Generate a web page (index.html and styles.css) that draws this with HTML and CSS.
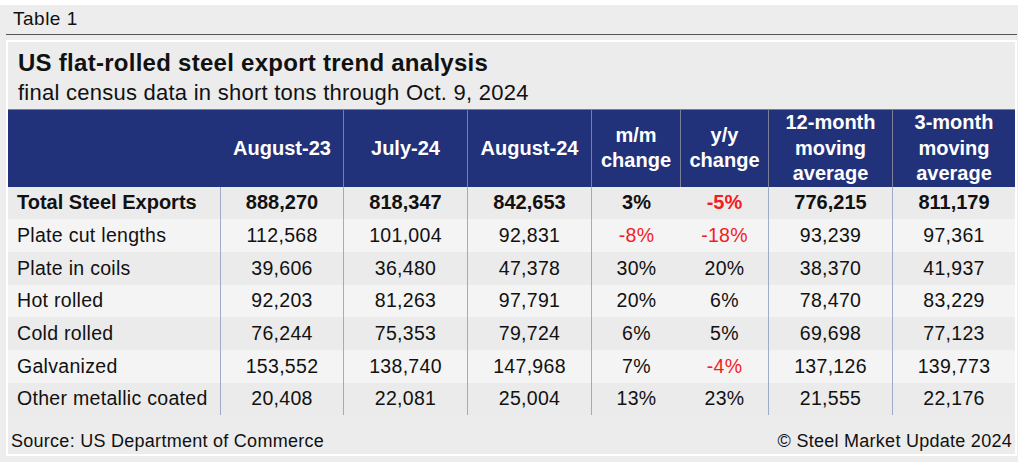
FILE: index.html
```html
<!DOCTYPE html>
<html lang="en">
<head>
<meta charset="utf-8">
<title>Table 1</title>
<link rel="stylesheet" href="styles.css">
</head>
<body>
<div class="page">
  <div class="caption">Table 1</div>
  <div class="rule"></div>
  <div class="panel">
    <h1 class="title">US flat-rolled steel export trend analysis</h1>
    <p class="subtitle">final census data in short tons through Oct. 9, 2024</p>
    <table class="data">
      <colgroup>
        <col class="c-label"><col class="c-w123"><col class="c-w124"><col class="c-w124"><col class="c-w89"><col class="c-w88"><col class="c-w124"><col class="c-w122">
      </colgroup>
      <thead>
        <tr>
          <th class="h-first"></th>
          <th class="h-div">August-23</th>
          <th class="h-div">July-24</th>
          <th class="h-div">August-24</th>
          <th class="h-div">m/m<br>change</th>
          <th class="h-div">y/y<br>change</th>
          <th class="h-div">12-month<br>moving<br>average</th>
          <th>3-month<br>moving<br>average</th>
        </tr>
      </thead>
      <tbody>
        <tr class="total dark">
          <td class="label b-div">Total Steel Exports</td>
          <td class="b-div">888,270</td><td class="b-div">818,347</td><td class="b-div">842,653</td>
          <td>3%</td><td class="neg b-div">-5%</td><td class="b-div">776,215</td><td>811,179</td>
        </tr>
        <tr class="light">
          <td class="label b-div">Plate cut lengths</td>
          <td class="b-div">112,568</td><td class="b-div">101,004</td><td class="b-div">92,831</td>
          <td class="neg">-8%</td><td class="neg b-div">-18%</td><td class="b-div">93,239</td><td>97,361</td>
        </tr>
        <tr class="dark">
          <td class="label b-div">Plate in coils</td>
          <td class="b-div">39,606</td><td class="b-div">36,480</td><td class="b-div">47,378</td>
          <td>30%</td><td class="b-div">20%</td><td class="b-div">38,370</td><td>41,937</td>
        </tr>
        <tr class="light">
          <td class="label b-div">Hot rolled</td>
          <td class="b-div">92,203</td><td class="b-div">81,263</td><td class="b-div">97,791</td>
          <td>20%</td><td class="b-div">6%</td><td class="b-div">78,470</td><td>83,229</td>
        </tr>
        <tr class="dark">
          <td class="label b-div">Cold rolled</td>
          <td class="b-div">76,244</td><td class="b-div">75,353</td><td class="b-div">79,724</td>
          <td>6%</td><td class="b-div">5%</td><td class="b-div">69,698</td><td>77,123</td>
        </tr>
        <tr class="light">
          <td class="label b-div">Galvanized</td>
          <td class="b-div">153,552</td><td class="b-div">138,740</td><td class="b-div">147,968</td>
          <td>7%</td><td class="neg b-div">-4%</td><td class="b-div">137,126</td><td>139,773</td>
        </tr>
        <tr class="dark">
          <td class="label b-div">Other metallic coated</td>
          <td class="b-div">20,408</td><td class="b-div">22,081</td><td class="b-div">25,004</td>
          <td>13%</td><td class="b-div">23%</td><td class="b-div">21,555</td><td>22,176</td>
        </tr>
      </tbody>
    </table>
    <div class="footer">
      <span>Source: US Department of Commerce</span>
      <span>© Steel Market Update 2024</span>
    </div>
  </div>
</div>
</body>
</html>
```

FILE: styles.css
```css
html, body {
  margin: 0;
  padding: 0;
  background: #ffffff;
}

body {
  font-family: "Liberation Sans", Arial, Helvetica, sans-serif;
  color: #111111;
}

.page {
  margin-top: 5px;
  width: 1018px;
  height: 457px;
  background: #ededed;
  overflow: hidden;
}

.caption {
  padding: 2px 0 0 13px;
  font-size: 19px;
  line-height: 24px;
  letter-spacing: 0.5px;
}

.rule {
  margin: 3px 1px 0 6px;
  height: 1px;
  background: #555555;
}

.panel {
  margin: 5px 1px 0 6px;
  border: 2px solid #ffffff;
  background: #ececec;
}

.title {
  margin: 7px 0 0 0;
  padding-left: 10px;
  font-size: 24px;
  line-height: 28px;
  font-weight: bold;
  letter-spacing: 0.27px;
}

.subtitle {
  margin: 3px 0 0 0;
  padding-left: 10px;
  font-size: 22px;
  line-height: 26px;
  letter-spacing: 0.25px;
}

.data {
  margin-top: 3px;
  width: 1007px;
  table-layout: fixed;
  border-collapse: separate;
  border-spacing: 0;
}

.c-label { width: 213px; }
.c-w123 { width: 123px; }
.c-w124 { width: 124px; }
.c-w89 { width: 89px; }
.c-w88 { width: 88px; }
.c-w122 { width: 122px; }

.data th {
  height: 76px;
  padding: 0;
  background: #22327a;
  color: #ffffff;
  font-size: 20px;
  line-height: 25.5px;
  font-weight: bold;
  text-align: center;
  vertical-align: middle;
  border-top: 1px solid #6f7eae;
  box-sizing: border-box;
}

.data th.h-div {
  border-right: 1px solid #7d8096;
}

.data td {
  height: 32.7px;
  padding: 0;
  font-size: 19.5px;
  letter-spacing: 0.3px;
  text-align: center;
  vertical-align: middle;
  box-sizing: border-box;
}

.data td.label {
  text-align: left;
  padding-left: 9px;
}

.data td.b-div {
  border-right: 1px solid #9dadc9;
}

.data tr.total td {
  font-weight: bold;
  font-size: 20px;
  letter-spacing: 0;
}

.data tr.dark td { background: #ebebeb; }
.data tr.light td { background: #f4f4f4; }

.data td.neg { color: #f21d1d; }

.footer {
  display: flex;
  justify-content: space-between;
  margin-top: 15px;
  padding: 0 3px 2px 3px;
  font-size: 18px;
  line-height: 22px;
  letter-spacing: 0.27px;
}
```
